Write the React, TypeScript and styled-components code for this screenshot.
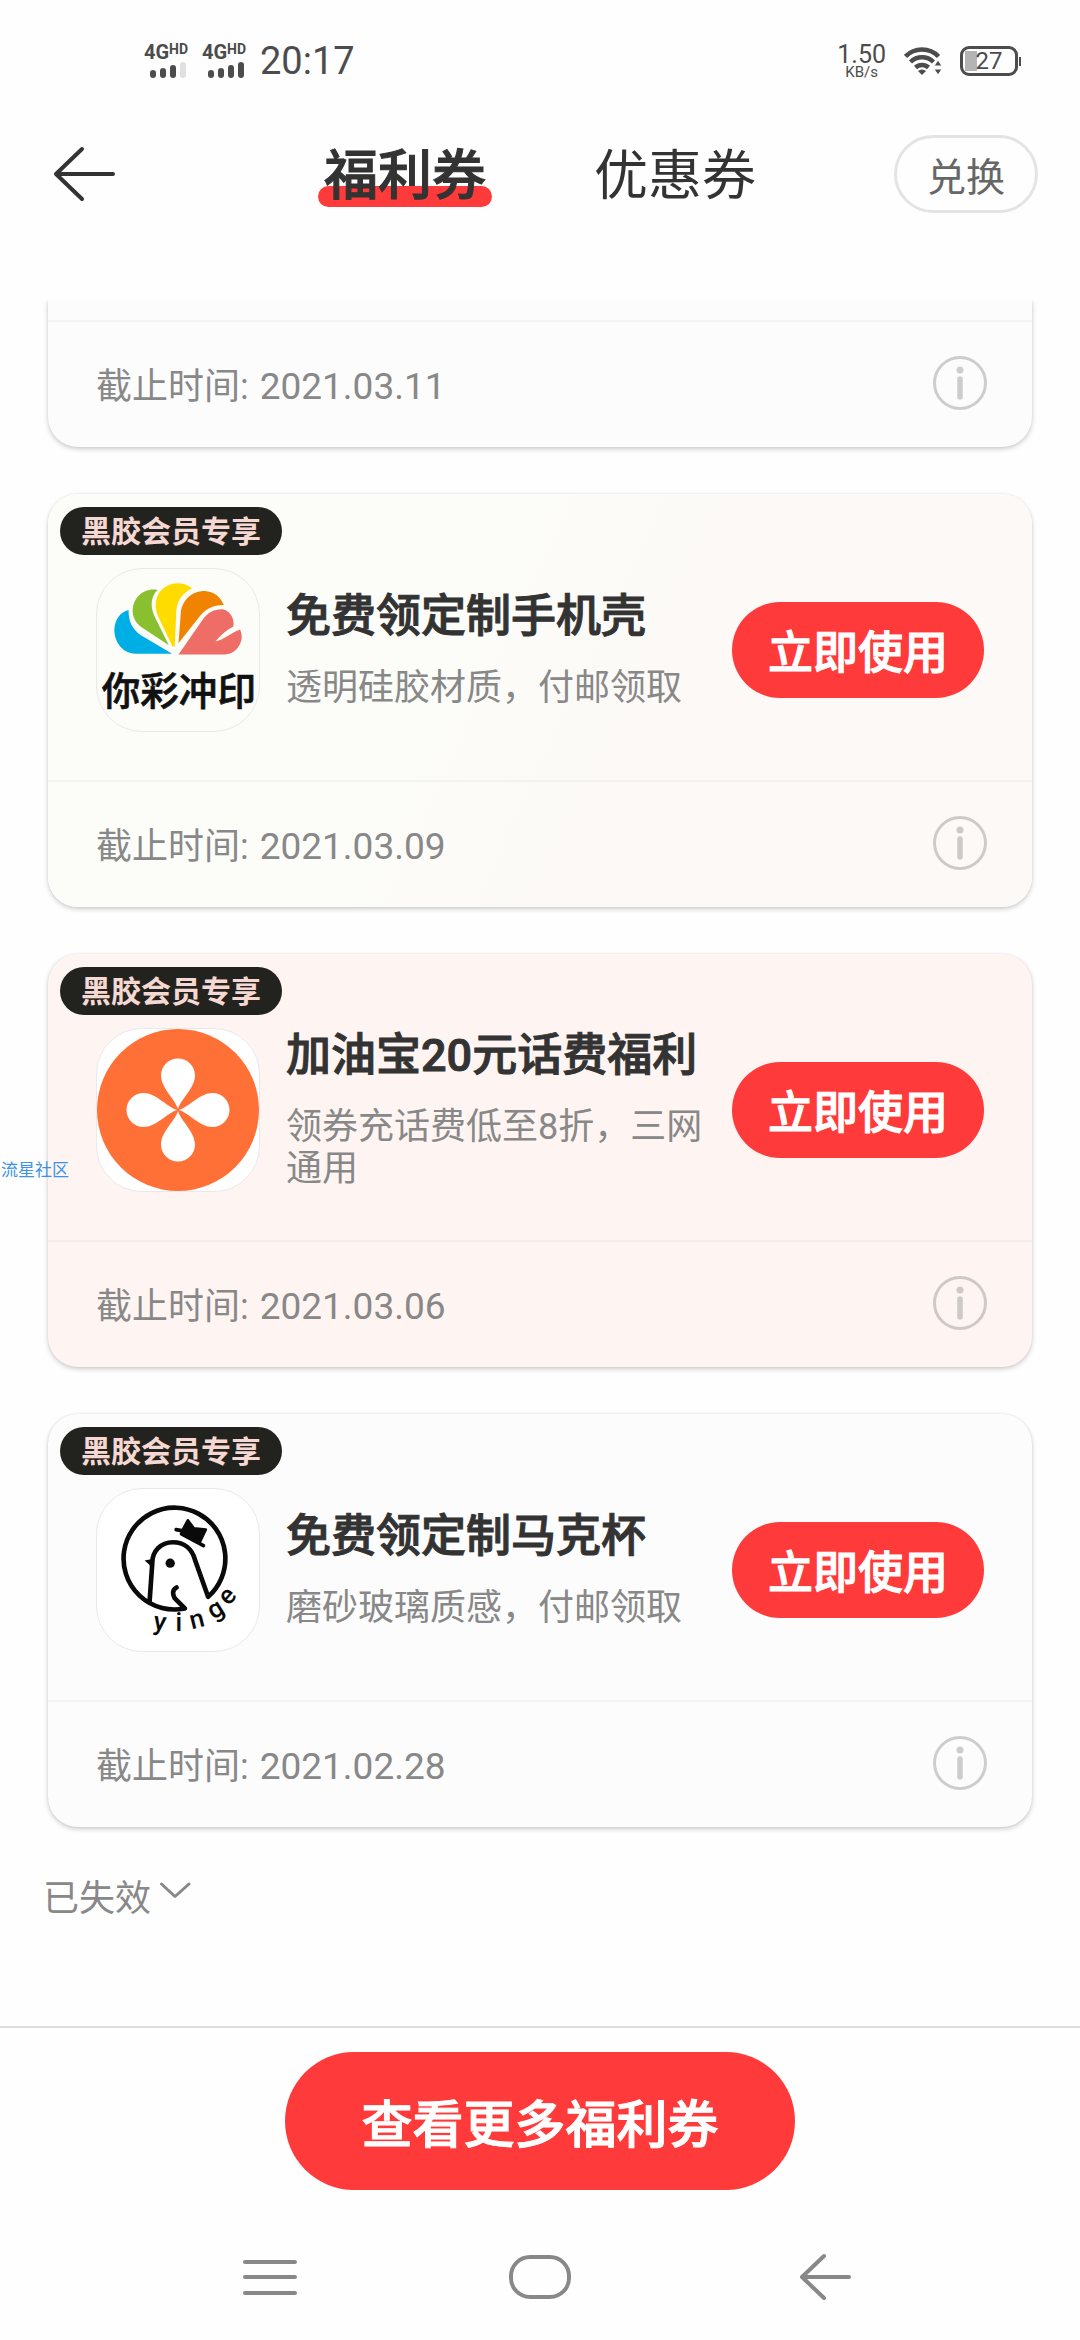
import React from "react";
import styled, { createGlobalStyle, css } from "styled-components";

const GlobalStyle = createGlobalStyle`
  *, *::before, *::after { box-sizing: border-box; }
  body {
    margin: 0;
    background: #fefefe;
    color: #333;
    font-family: Roboto, "Noto Sans CJK SC", sans-serif;
  }
  button { margin: 0; padding: 0; border: 0; background: none; font: inherit; color: inherit; cursor: pointer; }
  h2, p { margin: 0; }
  svg { display: block; }
`;

/* Weight between medium and bold, shared by headings and filled buttons. */
const semibold = css`
  font-weight: 500;
  -webkit-text-stroke: 1px currentColor;
`;

const Page = styled.div`
  position: relative;
  display: flex;
  flex-direction: column;
  min-height: 100vh;
`;

/* ---------- status bar ---------- */

const StatusBar = styled.div`
  display: flex;
  align-items: center;
  justify-content: space-between;
  height: 84px;
  padding: 38px 59px 0 144px;
  color: #4c4c4c;
`;

const StatusGroup = styled.div`
  display: flex;
  align-items: center;
  gap: ${(p: { $gap: number }) => p.$gap}px;
  height: 48px;
`;

const Signal = styled.div`
  display: flex;
  flex-direction: column;
  gap: 2px;
  width: 46px;
`;

const Network = styled.div`
  display: flex;
  align-items: flex-start;
  font-size: 20px;
  line-height: 16px;
  font-weight: 700;
`;

const NetworkSup = styled.span`
  font-size: 14px;
  line-height: 10px;
`;

const Bars = styled.div`
  display: flex;
  align-items: flex-end;
  gap: 4px;
  height: 16px;
  padding-left: 6px;
`;

const Bar = styled.i<{ $height: number; $off?: boolean }>`
  width: 6px;
  height: ${(p) => p.$height}px;
  border-radius: 3px;
  background: ${(p) => (p.$off ? "#e0e0e0" : "#4c4c4c")};
`;

const Clock = styled.span`
  font-size: 38px;
  line-height: 48px;
`;

const Speed = styled.div`
  display: flex;
  flex-direction: column;
  align-items: center;
  font-size: 25px;
  line-height: 22px;
`;

const SpeedUnit = styled.span`
  font-size: 15px;
  line-height: 12px;
`;

const Battery = styled.div`
  display: flex;
  align-items: center;
`;

const BatteryCase = styled.div`
  display: flex;
  align-items: center;
  justify-content: center;
  width: 58px;
  height: 30px;
  border: 3px solid #4c4c4c;
  border-radius: 9px;
  background: linear-gradient(#b4b4b4, #b4b4b4) 2px 2px / 12px 20px no-repeat;
  font-size: 24px;
  line-height: 24px;
`;

const BatteryTip = styled.i`
  width: 2px;
  height: 9px;
  margin-left: 1px;
  background: #4c4c4c;
`;

/* ---------- header ---------- */

const Header = styled.header`
  display: grid;
  grid-template-columns: 1fr auto 1fr;
  align-items: center;
  height: 180px;
  padding: 0 42px;
`;

const BackButton = styled.button`
  justify-self: start;
  padding-left: 6px;
`;

const Tabs = styled.nav`
  display: flex;
  gap: 96px;
  padding-top: 6px;
`;

const Tab = styled.button<{ $active?: boolean }>`
  position: relative;
  z-index: 0;
  padding: 0 6px;
  font-size: 54px;
  line-height: 72px;
  ${(p) =>
    p.$active &&
    css`
      ${semibold}
      &::before {
        content: "";
        position: absolute;
        z-index: -1;
        left: 0;
        right: 0;
        bottom: 6px;
        height: 21px;
        border-radius: 11px;
        background: #ff3a3a;
      }
    `}
`;

const ExchangeButton = styled.button`
  justify-self: end;
  width: 144px;
  height: 78px;
  border: 3px solid #e4e4e4;
  border-radius: 39px;
  color: #666;
  font-size: 39px;
`;

/* ---------- coupons ---------- */

const List = styled.main`
  display: flex;
  flex: 1;
  flex-direction: column;
  gap: 47px;
  margin-top: 36px;
  padding: 0 48px;
`;

const Card = styled.article<{ $tone: string; $cut?: boolean }>`
  position: relative;
  background: ${(p) => p.$tone};
  border-radius: ${(p) => (p.$cut ? "0 0 30px 30px" : "30px")};
  box-shadow: 0 2px 5px rgba(0, 0, 0, 0.2), 0 0 2px rgba(0, 0, 0, 0.08);
  clip-path: ${(p) => (p.$cut ? "inset(0 -12px -12px -12px)" : "none")};
`;

const Remainder = styled.div`
  height: 20px;
`;

const Badge = styled.span`
  position: absolute;
  top: 13px;
  left: 12px;
  height: 48px;
  padding: 1px 21px 0;
  border-radius: 24px;
  background: #22221f;
  color: #f5d8d2;
  font-size: 30px;
  line-height: 48px;
  font-weight: 700;
`;

const CardBody = styled.div`
  display: flex;
  align-items: center;
  gap: 26px;
  height: 286px;
  padding: 25px 48px 0;
`;

const Logo = styled.div<{ $plain?: boolean }>`
  flex: none;
  width: 164px;
  height: 164px;
  border: 1px solid #e9e9e9;
  border-radius: 46px;
  background: ${(p) => (p.$plain ? "transparent" : "#fff")};
  overflow: hidden;
`;

const Texts = styled.div`
  display: flex;
  flex: 1;
  flex-direction: column;
  gap: 22px;
  min-width: 0;
  padding-bottom: 2px;
`;

const Title = styled.h2`
  font-size: 45px;
  line-height: 56px;
  ${semibold}
`;

const Description = styled.p`
  color: #888;
  font-size: 36px;
  line-height: 42px;
`;

const UseButton = styled.button`
  flex: none;
  width: 252px;
  height: 96px;
  border-radius: 48px;
  background: #ff3a3a;
  color: #fff;
  font-size: 45px;
  ${semibold}
`;

const CardFooter = styled.footer`
  display: flex;
  align-items: center;
  justify-content: space-between;
  height: 127px;
  padding: 0 45px 3px 48px;
  border-top: 2px solid rgba(0, 0, 0, 0.035);
`;

const Deadline = styled.span`
  color: #888;
  font-size: 36px;
`;

const DateValue = styled.time`
  margin-left: 2px;
  font-size: 37px;
`;

const Expired = styled.button`
  display: flex;
  align-items: flex-start;
  align-self: flex-start;
  gap: 8px;
  margin-left: -5px;
  color: #888;
  font-size: 36px;
  line-height: 50px;
`;

/* ---------- bottom ---------- */

const BottomBar = styled.div`
  display: flex;
  justify-content: center;
  padding: 24px 0;
  border-top: 2px solid #dedede;
`;

const MoreButton = styled.button`
  width: 510px;
  height: 138px;
  border-radius: 69px;
  background: #ff3a3a;
  color: #fff;
  font-size: 51px;
  ${semibold}
`;

const SystemNav = styled.nav`
  display: grid;
  grid-template-columns: repeat(3, 1fr);
  align-items: center;
  justify-items: center;
  height: 126px;
  padding: 0 12.5%;
`;

const Watermark = styled.span`
  position: absolute;
  top: 50%;
  left: 1px;
  transform: translateY(-50%);
  color: #3a93e6;
  font-size: 17px;
  line-height: 24px;
`;

/* ---------- drawings ---------- */

const WifiIcon = () => (
  <svg width="38" height="30" viewBox="0 0 38 30" fill="none" stroke="#4c4c4c" strokeWidth="4.5">
    <path d="M1.5 10.5a23 23 0 0 1 33 0" />
    <path d="M6.5 16a16.500 16.500 0 0 1 23 0" />
    <path d="M11.500 21.500a9.500 9.500 0 0 1 13 0" />
    <path d="M14 25a6 6 0 0 1 8 0l-4 4z" fill="#4c4c4c" stroke="none" />
    <path d="M34 14l4 6h-8zM34 29l4-6h-8z" fill="#4c4c4c" stroke="#fefefe" strokeWidth="1" />
  </svg>
);

const BackIcon = () => (
  <svg width="72" height="60" viewBox="0 0 72 60" fill="none" stroke="#333" strokeWidth="4" strokeLinecap="round" strokeLinejoin="round">
    <path d="M34 5L8 30l26 25M8 30h57" />
  </svg>
);

const InfoIcon = () => (
  <svg width="54" height="54" viewBox="0 0 54 54" fill="none" stroke="#888" strokeOpacity="0.4" strokeLinecap="round">
    <circle cx="27" cy="27" r="25.500" strokeWidth="3" />
    <circle cx="27" cy="14" r="3.500" fill="#888" fillOpacity="0.4" stroke="none" />
    <path d="M27 23v18" strokeWidth="5.500" />
  </svg>
);

const ChevronIcon = () => (
  <svg width="32" height="48" viewBox="0 0 32 48" fill="none" stroke="#888" strokeWidth="3" strokeLinecap="round" strokeLinejoin="round">
    <path d="M2.500 10L16 22.500L30 10" />
  </svg>
);

const PetalLogo = () => (
  <svg width="162" height="162" viewBox="202 264 487 487" role="img" aria-label="你彩冲印">
    <path fill="#00aee6" d="M428 519H318C275 517 254 480 254 446C256 415 272 393 297 387C296 420 308 445 334 463Z" />
    <path fill="#8ac02f" d="M418 493L336 439C303 417 302 374 325 347C340 330 362 323 384 327C364 345 362 375 373 402Z" />
    <path fill="#ffdc00" d="M429 497L385 405C371 370 380 339 402 322C427 301 465 302 488 322C455 338 440 365 440 400L436 497Z" />
    <path fill="#f08300" d="M447 487L454 395C458 355 490 330 525 330C555 331 575 350 583 372C550 372 525 385 508 410Z" />
    <path fill="#ee6d66" d="M447 521L519 417C533 396 555 384 580 385C605 391 616 415 612 437C590 448 572 465 558 482C585 476 608 455 632 446C642 468 636 488 624 502C612 516 598 521 580 521Z" />
    <text x="448" y="674" textAnchor="middle" fontFamily="'Noto Sans CJK SC', sans-serif" fontWeight="500" fontSize="116" fill="#111" stroke="#111" strokeWidth="2">你彩冲印</text>
  </svg>
);

const CloverLogo = () => (
  <svg width="162" height="162" viewBox="1 1 162 162" role="img" aria-label="加油宝">
    <circle cx="82" cy="82" r="81" fill="#ff7036" />
    {[0, 90, 180, 270].map((turn) => (
      <path key={turn} transform={`rotate(${turn} 82 82)`} fill="#fff" d="M82 81C79 71 65 60 65 47.500A17 17 0 0 1 99 47.500C99 60 85 71 82 81Z" />
    ))}
  </svg>
);

const BIRD_LETTERS = [
  { char: "y", x: 388, y: 688, turn: 8 },
  { char: "i", x: 448, y: 690, turn: 0 },
  { char: "n", x: 508, y: 680, turn: -14 },
  { char: "g", x: 571, y: 646, turn: -32 },
  { char: "e", x: 611, y: 602, turn: -48 },
];

const BirdLogo = () => (
  <svg width="162" height="162" viewBox="202 264 487 487" role="img" aria-label="yinge">
    <g fill="none" stroke="#0a0a0a" strokeWidth="14" strokeLinecap="round" strokeLinejoin="round">
      <path d="M360 604L368 490C367 450 395 424 430 424C465 424 488 445 497 478L536 588A153 153 0 1 0 466 623L436 593C428 580 429 566 441 560" />
    </g>
    <path d="M345 479L372 474L366 502L358 490Z" fill="#0a0a0a" />
    <circle cx="422" cy="487" r="14" fill="#0a0a0a" />
    <g fill="#0a0a0a" stroke="#0a0a0a" strokeLinecap="round" strokeLinejoin="round">
      <path d="M457 392L475 358L493 382L529 386L511 424Z" strokeWidth="8" />
      <path d="M440 386L460 390M456 399L522 434" strokeWidth="11" />
    </g>
    {BIRD_LETTERS.map((l) => (
      <text key={l.char} transform={`translate(${l.x} ${l.y}) rotate(${l.turn})`} textAnchor="middle" fontFamily="Roboto, sans-serif" fontWeight="500" fontSize="78" fill="#0a0a0a">
        {l.char}
      </text>
    ))}
  </svg>
);

const navStroke = { fill: "none", stroke: "#888", strokeWidth: 4, strokeLinecap: "round", strokeLinejoin: "round" } as const;

const MenuIcon = () => (
  <svg width="96" height="60" viewBox="0 0 96 60" {...navStroke}>
    <path d="M23 15h50M23 30h50M23 46h50" />
  </svg>
);

const HomeIcon = () => (
  <svg width="96" height="60" viewBox="0 0 96 60" {...navStroke}>
    <rect x="19" y="10" width="58" height="40" rx="19" />
  </svg>
);

const ReturnIcon = () => (
  <svg width="96" height="60" viewBox="0 0 96 60" {...navStroke}>
    <path d="M62 9L40 30l22 21M40 30h47" />
  </svg>
);

/* ---------- data ---------- */

interface Coupon {
  title: string;
  description: string;
  deadline: string;
  tone: string;
  plain?: boolean;
  logo: React.ReactNode;
}

const COUPONS: Coupon[] = [
  {
    title: "免费领定制手机壳",
    description: "透明硅胶材质，付邮领取",
    deadline: "2021.03.09",
    tone: "linear-gradient(115deg, #fcfdf9 35%, #fcf9f6 60%)",
    plain: true,
    logo: <PetalLogo />,
  },
  {
    title: "加油宝20元话费福利",
    description: "领券充话费低至8折，三网通用",
    deadline: "2021.03.06",
    tone: "#fef5f2",
    logo: <CloverLogo />,
  },
  {
    title: "免费领定制马克杯",
    description: "磨砂玻璃质感，付邮领取",
    deadline: "2021.02.28",
    tone: "#fcfcfc",
    logo: <BirdLogo />,
  },
];

const NetworkSignal = ({ weak }: { weak?: boolean }) => (
  <Signal>
    <Network>
      4G<NetworkSup>HD</NetworkSup>
    </Network>
    <Bars>
      <Bar $height={8} />
      <Bar $height={10} />
      <Bar $height={13} />
      <Bar $height={16} $off={weak} />
    </Bars>
  </Signal>
);

const DeadlineRow = ({ date }: { date: string }) => (
  <CardFooter>
    <Deadline>
      截止时间: <DateValue>{date}</DateValue>
    </Deadline>
    <button aria-label="说明">
      <InfoIcon />
    </button>
  </CardFooter>
);

export default function App() {
  return (
    <Page>
      <GlobalStyle />
      <StatusBar>
        <StatusGroup $gap={12}>
          <NetworkSignal weak />
          <NetworkSignal />
          <Clock>20:17</Clock>
        </StatusGroup>
        <StatusGroup $gap={18}>
          <Speed>
            1.50
            <SpeedUnit>KB/s</SpeedUnit>
          </Speed>
          <WifiIcon />
          <Battery>
            <BatteryCase>27</BatteryCase>
            <BatteryTip />
          </Battery>
        </StatusGroup>
      </StatusBar>

      <Header>
        <BackButton aria-label="返回">
          <BackIcon />
        </BackButton>
        <Tabs>
          <Tab $active>福利券</Tab>
          <Tab>优惠券</Tab>
        </Tabs>
        <ExchangeButton>兑换</ExchangeButton>
      </Header>

      <List>
        <Card $tone="#fcfcfc" $cut>
          <Remainder />
          <DeadlineRow date="2021.03.11" />
        </Card>
        {COUPONS.map((c) => (
          <Card key={c.deadline} $tone={c.tone}>
            <Badge>黑胶会员专享</Badge>
            <CardBody>
              <Logo $plain={c.plain}>{c.logo}</Logo>
              <Texts>
                <Title>{c.title}</Title>
                <Description>{c.description}</Description>
              </Texts>
              <UseButton>立即使用</UseButton>
            </CardBody>
            <DeadlineRow date={c.deadline} />
          </Card>
        ))}
        <Expired>
          已失效
          <ChevronIcon />
        </Expired>
      </List>

      <BottomBar>
        <MoreButton>查看更多福利券</MoreButton>
      </BottomBar>
      <SystemNav>
        <button aria-label="菜单">
          <MenuIcon />
        </button>
        <button aria-label="主页">
          <HomeIcon />
        </button>
        <button aria-label="后退">
          <ReturnIcon />
        </button>
      </SystemNav>
      <Watermark>流星社区</Watermark>
    </Page>
  );
}
